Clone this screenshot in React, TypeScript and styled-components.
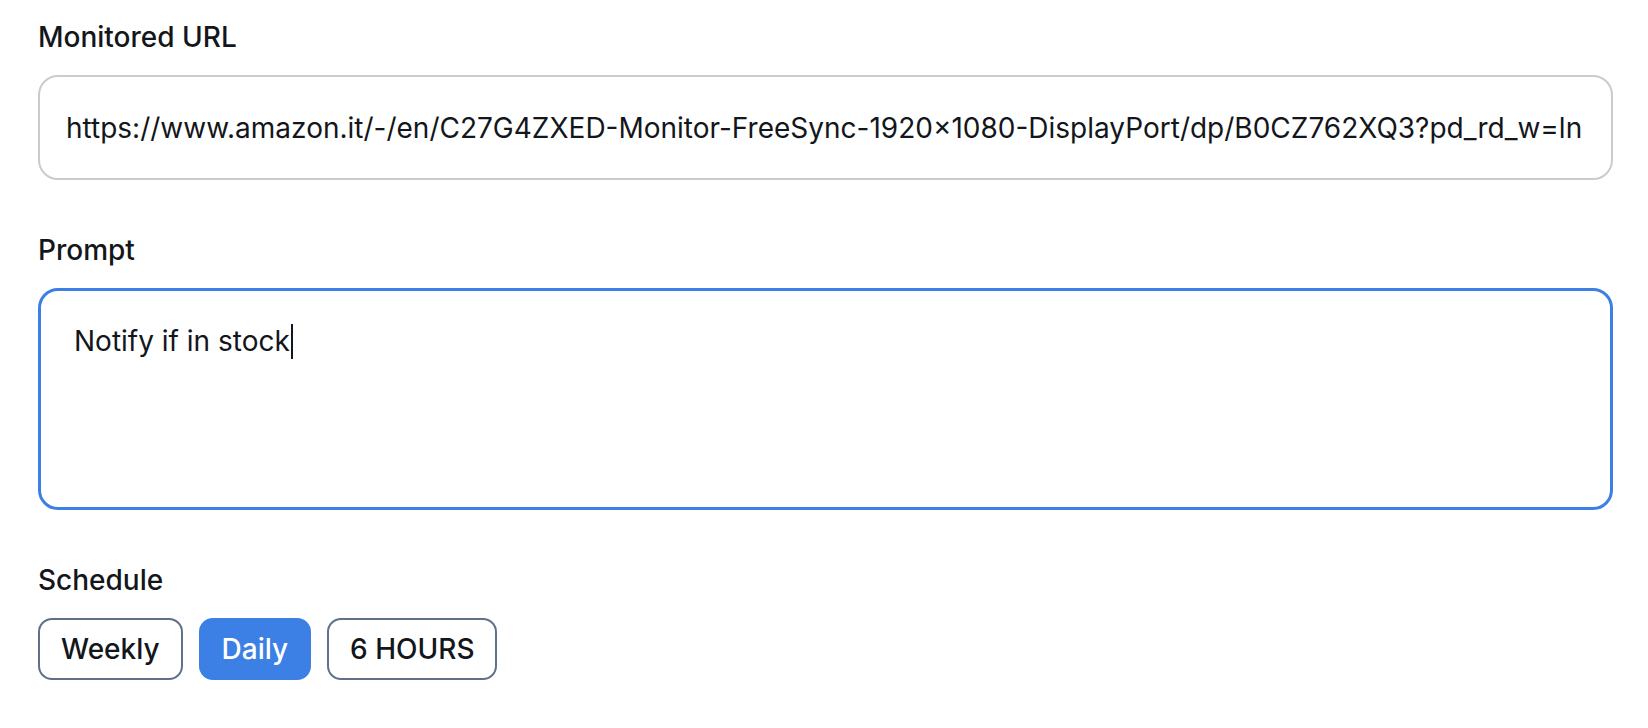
import { createGlobalStyle, styled } from 'styled-components';

const COLORS = {
	text: '#13161b',
	border: '#cbcbcb',
	blue: '#3c80e6',
	chip: '#617089',
};

const GlobalStyle = createGlobalStyle`
	html, body {
		margin: 0;
		padding: 0;
		background: #ffffff;
	}
	body {
		font-family: Inter, "Noto Sans", "Liberation Sans", sans-serif;
		color: ${COLORS.text};
	}
`;

const SCHEDULES = ['Weekly', 'Daily', '6 HOURS'];

const App = () => {
	return (
		<>
			<GlobalStyle />
			<Form>
				<Field>
					<Label>Monitored URL</Label>
					<UrlInput
						readOnly
						value="https://www.amazon.it/-/en/C27G4ZXED-Monitor-FreeSync-1920×1080-DisplayPort/dp/B0CZ762XQ3?pd_rd_w=ln"
					/>
				</Field>
				<Field>
					<Label>Prompt</Label>
					<PromptBox>
						Notify if in stock
						<Caret />
					</PromptBox>
				</Field>
				<Field>
					<Label>Schedule</Label>
					<ChipRow>
						{SCHEDULES.map((s) => (
							<Chip key={s} $active={s === 'Daily'}>
								{s}
							</Chip>
						))}
					</ChipRow>
				</Field>
			</Form>
		</>
	);
};

const Form = styled.div`
	width: 1575px;
	padding: 20px 0 0 38px;
	display: flex;
	flex-direction: column;
	gap: 53px;
`;

const Field = styled.div`
	display: flex;
	flex-direction: column;
	gap: 21px;
`;

const Label = styled.label`
	font-size: 28px;
	line-height: 34px;
	font-weight: 500;
	color: ${COLORS.text};
`;

const UrlInput = styled.input`
	box-sizing: border-box;
	width: 100%;
	height: 105px;
	padding: 0 26px;
	border: 2px solid ${COLORS.border};
	border-radius: 20px;
	font-family: Inter, "Noto Sans", sans-serif;
	font-size: 28px;
	color: ${COLORS.text};
	background: #fff;
	outline: none;
`;

const PromptBox = styled.div`
	box-sizing: border-box;
	width: 100%;
	height: 222px;
	padding: 29px 33px;
	border: 3px solid ${COLORS.blue};
	border-radius: 20px;
	font-size: 28px;
	line-height: 42px;
	color: ${COLORS.text};
`;

const Caret = styled.span`
	display: inline-block;
	width: 2px;
	height: 35px;
	margin-left: 1px;
	vertical-align: -8px;
	background: ${COLORS.text};
`;

const ChipRow = styled.div`
	display: flex;
	gap: 16px;
`;

const Chip = styled.button<{ $active?: boolean }>`
	box-sizing: border-box;
	height: 62px;
	padding: 0 21px;
	border: 2px solid ${({ $active }) => ($active ? COLORS.blue : COLORS.chip)};
	border-radius: 14px;
	background: ${({ $active }) => ($active ? COLORS.blue : '#fff')};
	color: ${({ $active }) => ($active ? '#fff' : COLORS.text)};
	font-family: Inter, "Noto Sans", sans-serif;
	font-size: 28px;
	font-weight: 500;
	cursor: pointer;
`;

export default App;
